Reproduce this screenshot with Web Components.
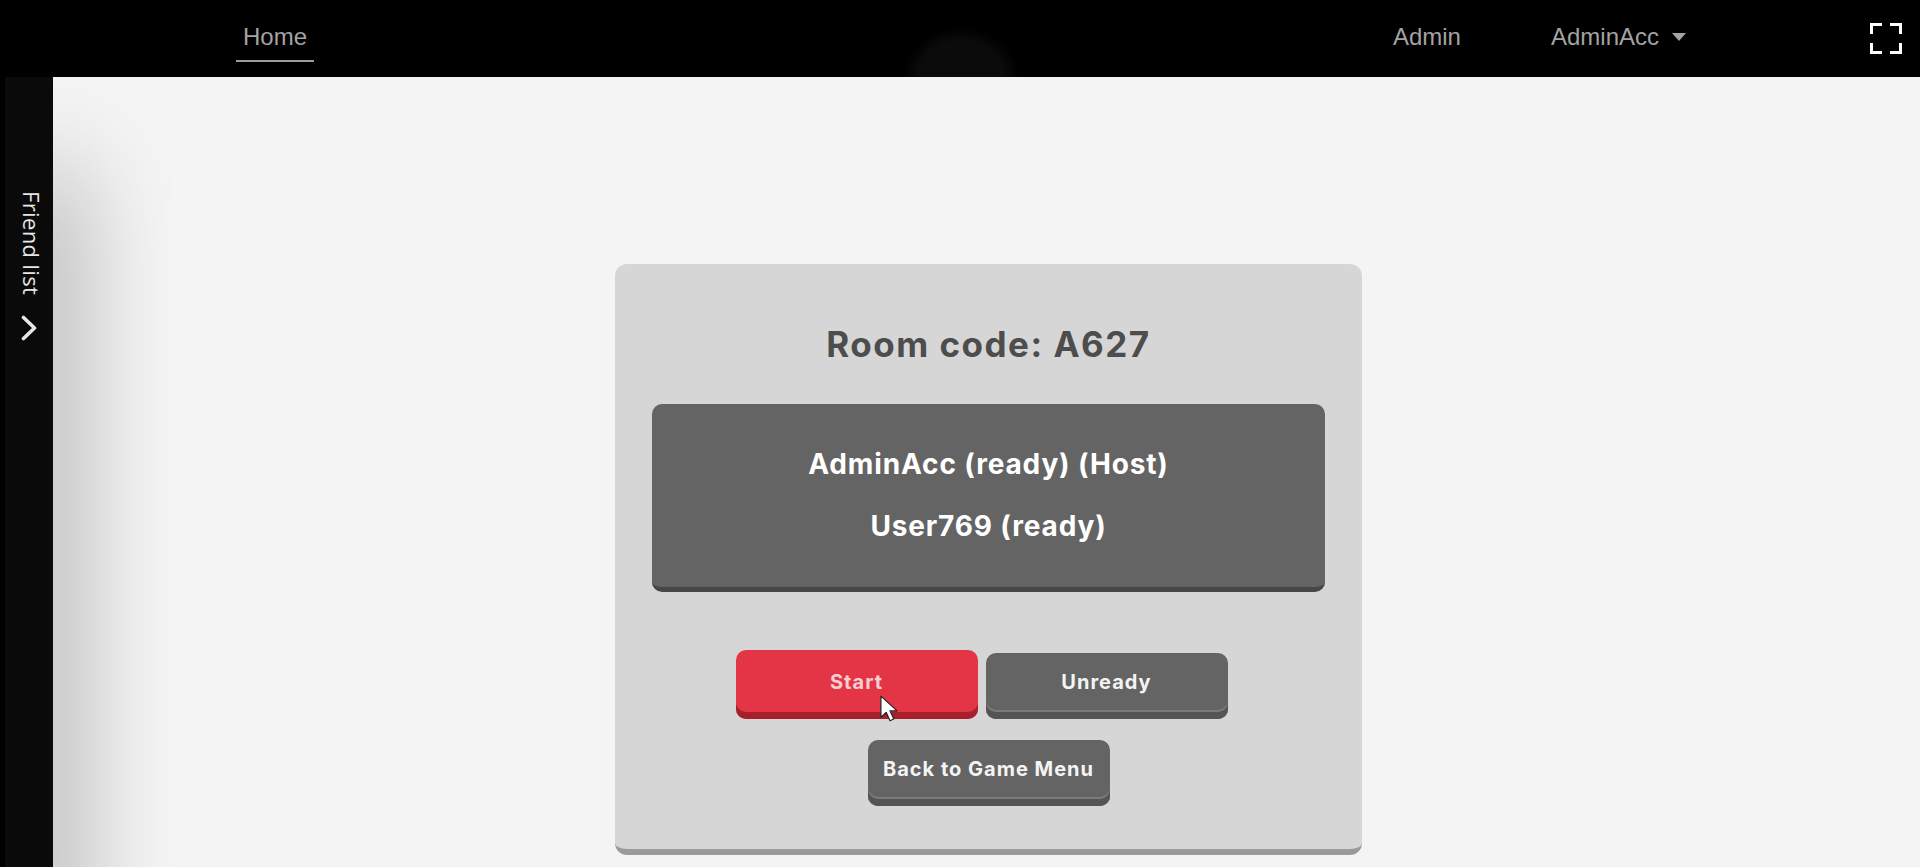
<!DOCTYPE html>
<html>
<head>
<meta charset="utf-8">
<title>Room</title>
<style>
html, body { margin: 0; height: 100%; overflow: hidden; background: #f4f4f4; }
body { display: flex; flex-direction: column; font-family: "Liberation Sans", sans-serif; }
.page { flex: 1; display: flex; min-height: 0; }
</style>
</head>
<body>
<top-nav></top-nav>
<div class="page">
    <friend-rail></friend-rail>
    <room-view>
        <room-card code="A627">
            <player-list>
                <div>AdminAcc (ready) (Host)</div>
                <div>User769 (ready)</div>
            </player-list>
            <game-button slot="actions" kind="red" hovered>Start</game-button>
            <game-button slot="actions" trail>Unready</game-button>
            <game-button slot="actions">Back to Game Menu</game-button>
        </room-card>
    </room-view>
</div>

<script>
'use strict'

const navTemplate = document.createElement('template')
navTemplate.innerHTML = /*html*/`
<style>
:host {
    display: flex;
    align-items: center;
    height: 77px;
    flex: none;
    position: relative;
    z-index: 2;
    background: radial-gradient(ellipse 58px 50px at 961px 77px, #0b0b0b 0 72%, #000 100%);
    color: #a3a3a3;
    font: 24px "Liberation Sans", sans-serif;
    padding: 0 18px 0 236px;
}
.home {
    height: 50px;
    margin-top: -3px;
    padding: 1px 7px 0;
    box-sizing: border-box;
    display: flex;
    align-items: center;
    border-bottom: 2px solid #9c9c9c;
}
.spacer { flex: 1; }
.admin { margin-right: 90px; margin-top: -3px; margin-left: 1px; }
.acc { margin-right: 184px; margin-top: -3px; }
.caret {
    display: inline-block;
    margin-left: 13px;
    vertical-align: 4px;
    border-left: 7px solid transparent;
    border-right: 7px solid transparent;
    border-top: 8px solid #a3a3a3;
}
svg { display: block; }
</style>
<div class="home">Home</div>
<div class="spacer"></div>
<div class="admin">Admin</div>
<div class="acc">AdminAcc<span class="caret"></span></div>
<svg width="32" height="31" viewBox="0 0 32 31" fill="none" stroke="#fff" stroke-width="3">
    <path d="M1.5 11V1.5H12M20 1.5H30.5V11M30.5 20V29.5H20M12 29.5H1.5V20"/>
</svg>`

export_el('top-nav', navTemplate)

const railTemplate = document.createElement('template')
railTemplate.innerHTML = /*html*/`
<style>
:host {
    display: flex;
    flex-direction: column;
    align-items: center;
    flex: none;
    box-sizing: border-box;
    width: 53px;
    padding: 114px 0 0 5px;
    background: #000;
    position: relative;
    z-index: 1;
    color: #e6e6e6;
    font: 22px "Open Sans", sans-serif;
}
.bar {
    position: absolute;
    inset: 0 0 0 5px;
    background: #0a0a0a;
    box-shadow: 14px 95px 100px rgba(0, 0, 0, .42);
}
.label {
    position: relative;
    writing-mode: vertical-rl;
    line-height: 24px;
    letter-spacing: .35px;
    margin-left: 6px;
}
svg { position: relative; display: block; margin-top: 20px; }
</style>
<div class="bar"></div>
<div class="label">Friend list</div>
<svg width="16" height="26" viewBox="0 0 16 26" fill="none" stroke="#e6e6e6" stroke-width="3.6" stroke-linecap="round" stroke-linejoin="round">
    <path d="M2.5 2.5 13.5 13 2.5 23.5"/>
</svg>`

export_el('friend-rail', railTemplate)

const viewTemplate = document.createElement('template')
viewTemplate.innerHTML = /*html*/`
<style>
:host {
    flex: 1;
    display: flex;
    justify-content: center;
    align-items: flex-start;
    padding: 187px 0 0 4px;
    min-width: 0;
}
</style>
<slot></slot>`

export_el('room-view', viewTemplate)

const cardTemplate = document.createElement('template')
cardTemplate.innerHTML = /*html*/`
<style>
:host {
    display: block;
    box-sizing: border-box;
    width: 747px;
    height: 591px;
    padding: 0 37px;
    background: #d6d6d6;
    border-bottom: 6px solid #9a9a9a;
    border-radius: 12px;
    font-family: "Inter", "Liberation Sans", sans-serif;
}
h2 {
    margin: 0;
    height: 140px;
    display: flex;
    align-items: center;
    justify-content: center;
    padding-top: 20px;
    box-sizing: border-box;
    color: #4d4d4d;
    font-size: 35px;
    letter-spacing: 1.5px;
    font-weight: 700;
}
.actions {
    display: flex;
    flex-wrap: wrap;
    justify-content: center;
    align-items: flex-end;
    column-gap: 8px;
    row-gap: 21px;
    margin-top: 58px;
}
</style>
<h2></h2>
<slot></slot>
<div class="actions"><slot name="actions"></slot></div>`

class RoomCard extends HTMLElement {
    constructor() {
        super()
        this.attachShadow({mode: 'open'})
    }
    connectedCallback() {
        this.shadowRoot.appendChild(cardTemplate.content.cloneNode(true))
        this.shadowRoot.querySelector('h2').textContent = `Room code: ${this.getAttribute('code')}`
    }
}
customElements.define('room-card', RoomCard)

const listTemplate = document.createElement('template')
listTemplate.innerHTML = /*html*/`
<style>
:host {
    display: flex;
    flex-direction: column;
    align-items: center;
    gap: 30px;
    box-sizing: border-box;
    height: 188px;
    padding-top: 44px;
    background: #646464;
    border-bottom: 5px solid #474747;
    border-radius: 10px;
    color: #fff;
    font-size: 28px;
    letter-spacing: .85px;
    font-weight: 700;
    line-height: 32px;
}
</style>
<slot></slot>`

export_el('player-list', listTemplate)

const buttonTemplate = document.createElement('template')
buttonTemplate.innerHTML = /*html*/`
<style>
:host {
    display: block;
    box-sizing: border-box;
    position: relative;
    width: 242px;
    height: 66px;
    background: #646464;
    border-radius: 10px;
    color: #f4f4f4;
    font-size: 20px;
    letter-spacing: 1px;
    font-weight: 700;
    text-align: center;
    line-height: 58px;
    box-shadow: inset 0 -7px 0 #545454, inset 0 -9px 0 #7b7b7b;
}
:host([kind="red"]) {
    background: #e33546;
    color: #f7cfd3;
    box-shadow: inset 0 -7px 0 #a81f2c;
}
:host([hovered]) {
    height: 69px;
    line-height: 65px;
}
:host([trail]) {
    margin-right: 14px;
}
svg {
    position: absolute;
    left: 144px;
    top: 45px;
}
</style>
<slot></slot>`

class GameButton extends HTMLElement {
    constructor() {
        super()
        this.attachShadow({mode: 'open'})
    }
    connectedCallback() {
        this.shadowRoot.appendChild(buttonTemplate.content.cloneNode(true))
        if (this.hasAttribute('hovered')) {
            // mouse pointer caught in the shot
            const holder = document.createElement('div')
            holder.innerHTML = `<svg width="19" height="27" viewBox="0 0 20 28">
                <path d="M1 1V23L6.5 18L10.5 27L14.5 25L10.5 16.5H18Z" fill="#fff" stroke="#222" stroke-width="1.2" stroke-linejoin="round"/>
            </svg>`
            this.shadowRoot.appendChild(holder.firstElementChild)
        }
    }
}
customElements.define('game-button', GameButton)

function export_el(name, template) {
    customElements.define(name, class extends HTMLElement {
        constructor() {
            super()
            this.attachShadow({mode: 'open'})
            this.shadowRoot.appendChild(template.content.cloneNode(true))
        }
    })
}
</script>
</body>
</html>
